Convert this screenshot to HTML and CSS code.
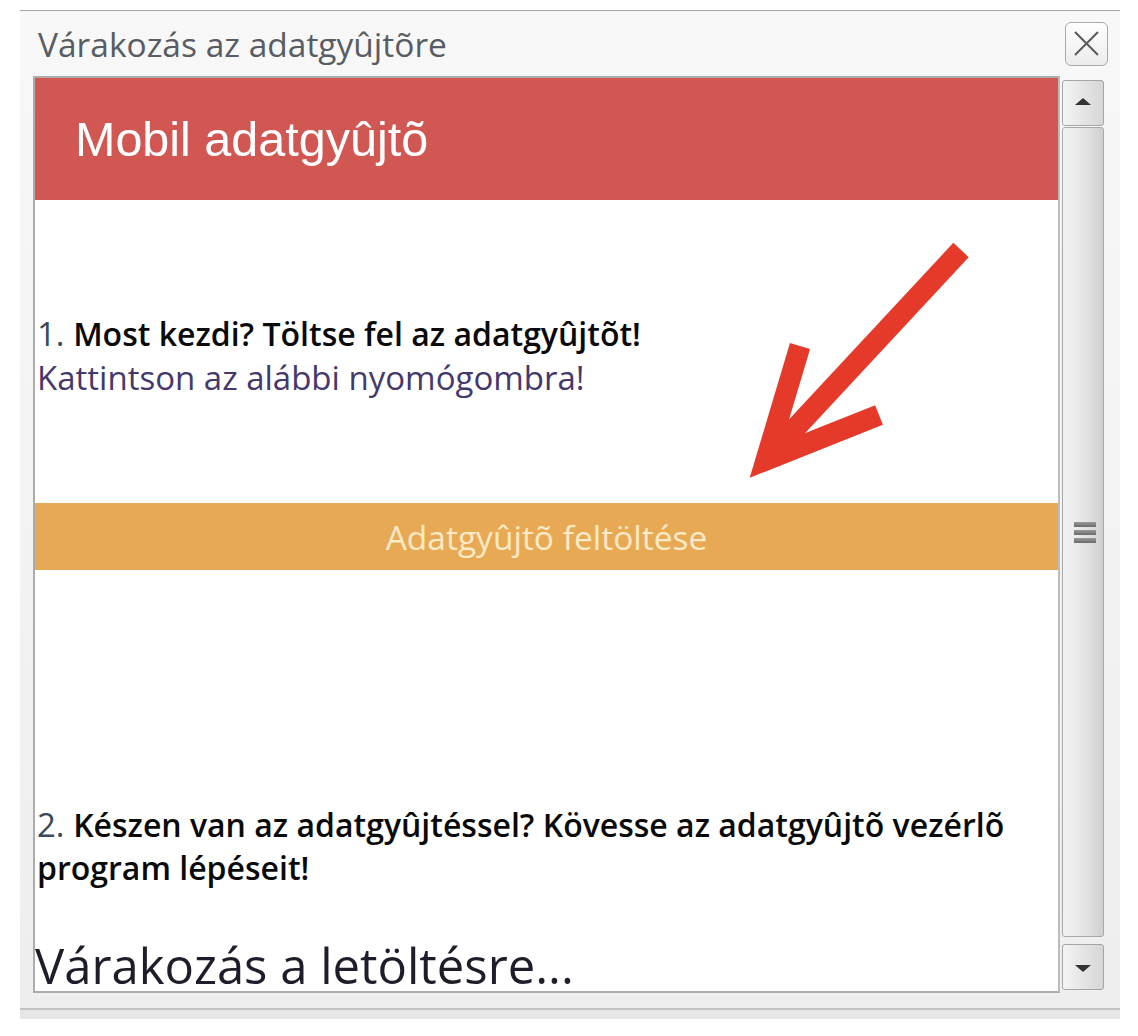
FILE: index.html
```html
<!DOCTYPE html>
<html lang="hu">
<head>
<meta charset="utf-8">
<title>Várakozás az adatgyûjtõre</title>
<link rel="stylesheet" href="styles.css">
</head>
<body>
<div class="dialog">
  <div class="titlebar">
    <span class="title">Várakozás az adatgyûjtõre</span>
    <button class="close" type="button" aria-label="Bezárás">
      <svg width="27" height="27" viewBox="0 0 27 27"><path d="M2 2 L25 25 M25 2 L2 25" stroke="#5a5a5a" stroke-width="2" fill="none"/></svg>
    </button>
  </div>
  <div class="main">
    <div class="frame">
      <div class="header">Mobil adatgyûjtõ</div>
      <div class="content">
        <svg class="arrow" viewBox="35 200 1022 791" width="1022" height="791">
          <path d="M961 250 L775 450" stroke="#e5392a" stroke-width="21" fill="none"/>
          <path d="M800 346 L766 460 L879 415" stroke="#e5392a" stroke-width="21" fill="none" stroke-linejoin="miter" stroke-miterlimit="10"/>
        </svg>
        <div class="step">
          <p class="line"><span class="num">1.</span> <span class="strong">Most kezdi? Töltse fel az adatgyûjtõt!</span></p>
          <p class="line hint">Kattintson az alábbi nyomógombra!</p>
        </div>
        <div class="upload">Adatgyûjtõ feltöltése</div>
        <div class="step step2">
          <p class="line"><span class="num">2.</span> <span class="strong">Készen van az adatgyûjtéssel? Kövesse az adatgyûjtõ vezérlõ<br>program lépéseit!</span></p>
        </div>
        <div class="waiting">Várakozás a letöltésre...</div>
      </div>
    </div>
    <div class="scrollbar">
      <div class="sb-btn"><span class="tri-up"></span></div>
      <div class="sb-thumb"><span class="grip"></span><span class="grip"></span><span class="grip"></span></div>
      <div class="sb-btn"><span class="tri-down"></span></div>
    </div>
  </div>
  <div class="footer"></div>
</div>
</body>
</html>
```
FILE: styles.css
```css
html, body {
  margin: 0;
  padding: 0;
  background: #ffffff;
}

.dialog {
  margin: 10px 0 0 20px;
  width: 1100px;
  background: linear-gradient(#f8f8f8, #eeeeee);
  border-top: 1px solid #a8a8a8;
  font-family: "Open Sans", "DejaVu Sans", sans-serif;
}

.titlebar {
  height: 65px;
  display: flex;
  align-items: center;
  justify-content: space-between;
  padding: 0 12px 0 18px;
}

.title {
  font-size: 33.5px;
  color: #585c63;
}

.close {
  width: 43px;
  height: 44px;
  padding: 0;
  display: flex;
  align-items: center;
  justify-content: center;
  border: 1px solid #a9a9a9;
  border-radius: 6px;
  background: linear-gradient(#ffffff, #ececec);
}

.main {
  display: flex;
  height: 917px;
  padding-left: 13px;
  gap: 2px;
}

.frame {
  width: 1027px;
  box-sizing: border-box;
  border: 2px solid #adadad;
  border-right-color: #bdbdbd;
  background: #ffffff;
  overflow: hidden;
}

.header {
  height: 122px;
  display: flex;
  align-items: center;
  padding-left: 40px;
  background: #d15753;
  color: #ffffff;
  font-family: "Liberation Sans", Arial, sans-serif;
  font-size: 48.5px;
}

.content {
  position: relative;
  padding-top: 112px;
}

.arrow {
  position: absolute;
  top: 0;
  left: 0;
  pointer-events: none;
}

.step {
  padding-left: 2px;
}

.line {
  margin: 0;
  font-size: 33px;
  line-height: 44px;
  color: #3a3a3a;
}

.strong {
  color: #0a0a0a;
  font-size: 32px;
  font-weight: 600;
}

.num {
  color: #3c4a5a;
}

.hint {
  color: #45386a;
}

.upload {
  margin-top: 103px;
  height: 67px;
  display: flex;
  align-items: center;
  justify-content: center;
  background: #e8a955;
  color: #fdeac6;
  font-size: 33.5px;
}

.step2 {
  margin-top: 233px;
}

.step2 .line {
  line-height: 43px;
}

.waiting {
  margin-top: 52px;
  font-size: 49px;
  line-height: 1;
  color: #1e1e2a;
}

.scrollbar {
  width: 42px;
  padding: 4px 0 3px;
  display: flex;
  flex-direction: column;
  box-sizing: border-box;
}

.sb-btn {
  height: 46px;
  box-sizing: border-box;
  border: 1px solid #a5a5a5;
  border-radius: 3px;
  background: linear-gradient(90deg, #f5f5f5, #e2e2e2 60%, #d6d6d6);
  display: flex;
  align-items: center;
  justify-content: center;
}

.tri-up {
  width: 0;
  height: 0;
  border-left: 8px solid transparent;
  border-right: 8px solid transparent;
  border-bottom: 7px solid #333333;
  margin-top: -4px;
}

.tri-down {
  width: 0;
  height: 0;
  border-left: 8px solid transparent;
  border-right: 8px solid transparent;
  border-top: 7px solid #333333;
  margin-top: 2px;
}

.sb-thumb {
  flex: 1;
  margin: 1px 0 7px;
  box-sizing: border-box;
  border: 1px solid #a8a8a8;
  border-radius: 3px;
  background: linear-gradient(90deg, #f2f2f2, #ececec 30%, #dedede 70%, #d0d0d0);
  display: flex;
  flex-direction: column;
  align-items: center;
  justify-content: center;
  gap: 3px;
  padding-left: 3px;
}

.grip {
  width: 22px;
  height: 5px;
  background: linear-gradient(#9a9a9a, #6a6a6a);
}

.footer {
  box-sizing: border-box;
  margin-top: 15px;
  border-top: 2px solid #c2c2c2;
  background: #e6e6e6;
  height: 11px;
}
```
